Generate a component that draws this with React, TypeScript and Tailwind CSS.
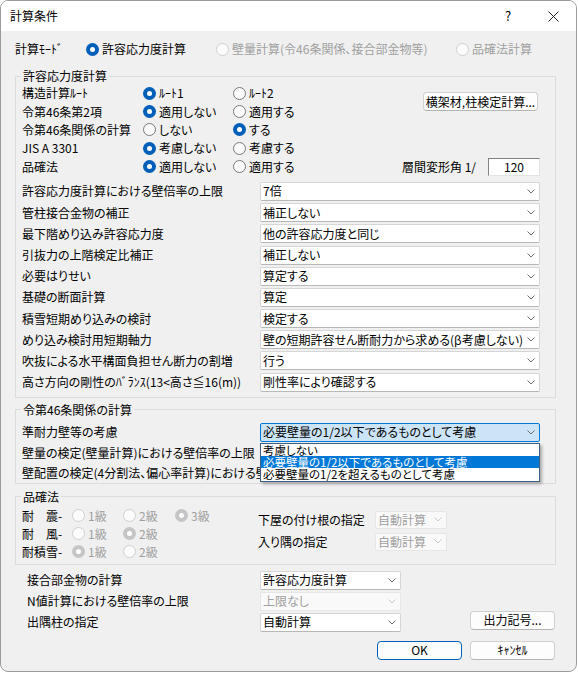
import React from "react";

const FONT = "font-['Noto_Sans_CJK_JP','Noto_Sans',sans-serif] [font-feature-settings:'palt']";

function Chevron({ disabled }: { disabled?: boolean }) {
  return (
    <svg width="8" height="5" viewBox="0 0 8 5" className="shrink-0">
      <polyline
        points="0.5,0.5 4,4 7.5,0.5"
        fill="none"
        stroke={disabled ? "#c8c8c8" : "#6e6e6e"}
        strokeWidth="1"
      />
    </svg>
  );
}

function Radio({
  label,
  checked,
  disabled,
  className = "",
}: {
  label: string;
  checked?: boolean;
  disabled?: boolean;
  className?: string;
}) {
  let circle = "border border-[#7a7a7a] bg-[#fbfbfb]";
  if (checked && !disabled) circle = "bg-[#005fb8]";
  if (!checked && disabled) circle = "border border-[#cfcfcf] bg-[#fbfbfb]";
  if (checked && disabled) circle = "bg-[#c5c5c5]";
  return (
    <div className={`flex items-center gap-[3px] shrink-0 ${className}`}>
      <span className={`w-[13px] h-[13px] rounded-full flex items-center justify-center shrink-0 ${circle}`}>
        {checked && <span className="w-[5px] h-[5px] rounded-full bg-white" />}
      </span>
      <span className={`whitespace-nowrap ${disabled ? "text-[#a0a0a0]" : ""}`}>{label}</span>
    </div>
  );
}

function Combo({
  value,
  disabled,
  active,
  className = "",
}: {
  value: string;
  disabled?: boolean;
  active?: boolean;
  className?: string;
}) {
  let look = "bg-white border border-[#d6d6d6] border-b-[#b8b8b8]";
  if (disabled) look = "bg-[#f9f9f9] border border-[#e6e6e6] text-[#a0a0a0]";
  if (active) look = "bg-[#cce4f7] border border-[#0078d7]";
  return (
    <div className={`h-[19px] flex items-center pl-[2px] pr-[4px] rounded-[2px] ${look} ${className}`}>
      <span className="flex-1 whitespace-nowrap overflow-hidden">{value}</span>
      <Chevron disabled={disabled} />
    </div>
  );
}

function Btn({ children, ok, className = "" }: { children: React.ReactNode; ok?: boolean; className?: string }) {
  return (
    <button
      className={`h-[19px] rounded-[4px] bg-[#fdfdfd] flex items-center justify-center whitespace-nowrap ${
        ok ? "border border-[#005fb8]" : "border border-[#d0d0d0] border-b-[#b5b5b5]"
      } ${className}`}
    >
      {children}
    </button>
  );
}

function Group({ title, className = "", children }: { title: string; className?: string; children: React.ReactNode }) {
  return (
    <fieldset className={`border border-[#dcdcdc] pl-[6px] pr-[15px] ${className}`}>
      <legend className="px-[2px] -ml-[1px] h-[16px] leading-[16px]">{title}</legend>
      {children}
    </fieldset>
  );
}

const radioRows = [
  { label: "構造計算ﾙｰﾄ", a: "ﾙｰﾄ1", b: "ﾙｰﾄ2", pick: 0 },
  { label: "令第46条第2項", a: "適用しない", b: "適用する", pick: 0 },
  { label: "令第46条関係の計算", a: "しない", b: "する", pick: 1 },
  { label: "JIS A 3301", a: "考慮しない", b: "考慮する", pick: 0 },
  { label: "品確法", a: "適用しない", b: "適用する", pick: 0 },
];

const comboRows = [
  ["許容応力度計算における壁倍率の上限", "7倍"],
  ["管柱接合金物の補正", "補正しない"],
  ["最下階めり込み許容応力度", "他の許容応力度と同じ"],
  ["引抜力の上階検定比補正", "補正しない"],
  ["必要はりせい", "算定する"],
  ["基礎の断面計算", "算定"],
  ["積雪短期めり込みの検討", "検定する"],
  ["めり込み検討用短期軸力", "壁の短期許容せん断耐力から求める(β考慮しない)"],
  ["吹抜による水平構面負担せん断力の割増", "行う"],
  ["高さ方向の剛性のﾊﾞﾗﾝｽ(13<高さ≦16(m))", "剛性率により確認する"],
];

const gradeRows = [
  { label: "耐　震-", items: ["1級", "2級", "3級"], pick: 2 },
  { label: "耐　風-", items: ["1級", "2級"], pick: 1 },
  { label: "耐積雪-", items: ["1級", "2級"], pick: 0 },
];

const listItems = ["考慮しない", "必要壁量の1/2以下であるものとして考慮", "必要壁量の1/2を超えるものとして考慮"];

export default function App() {
  return (
    <div className={`w-[578px] h-[673px] bg-white text-black text-[12px] leading-[16px] ${FONT}`}>
      <div className="w-[577px] h-[672px] rounded-[8px] border border-[#9b9b9b] overflow-hidden flex flex-col bg-[#f0f0f0]">
        {/* title bar */}
        <div className="h-[30px] shrink-0 bg-white flex items-center pl-[9px]">
          <span>計算条件</span>
          <span className="ml-auto w-[46px] flex justify-center text-[13px]">?</span>
          <span className="w-[45px] flex justify-center">
            <svg width="11" height="11" viewBox="0 0 11 11">
              <path d="M0.5 0.5 L10.5 10.5 M10.5 0.5 L0.5 10.5" stroke="#1a1a1a" strokeWidth="1" />
            </svg>
          </span>
        </div>

        <div className="flex-1 pl-[14px] pr-[20px] pt-[9px]">
          {/* mode */}
          <div className="h-[18px] flex items-center">
            <span className="w-[71px] shrink-0">計算ﾓｰﾄﾞ</span>
            <Radio className="w-[130px]" label="許容応力度計算" checked />
            <Radio className="w-[240px]" label="壁量計算(令46条関係、接合部金物等)" disabled />
            <Radio label="品確法計算" disabled />
          </div>

          <Group title="許容応力度計算" className="mt-[10px] pb-[5px]">
            <div className="flex">
              <div className="flex flex-col">
                {radioRows.map((r) => (
                  <div key={r.label} className="h-[18.4px] flex items-center">
                    <span className="w-[121px] shrink-0 whitespace-nowrap">{r.label}</span>
                    <Radio className="w-[90px]" label={r.a} checked={r.pick === 0} />
                    <Radio label={r.b} checked={r.pick === 1} />
                  </div>
                ))}
              </div>
              <div className="flex-1 flex flex-col items-end justify-between">
                <Btn className="mt-[8px] w-[115px] mr-[2px]">横架材,柱検定計算...</Btn>
                <div className="flex items-center">
                  <span>層間変形角 1/</span>
                  <div className="ml-[12px] w-[52px] h-[18px] bg-white border border-t-[#838383] border-l-[#838383] border-r-[#e3e3e3] border-b-[#e3e3e3] flex items-center justify-center">
                    120
                  </div>
                </div>
              </div>
            </div>
            <div className="mt-[6px] flex flex-col gap-[2.2px]">
              {comboRows.map(([label, value]) => (
                <div key={label} className="h-[19px] flex items-center">
                  <span className="w-[238px] shrink-0 whitespace-nowrap">{label}</span>
                  <Combo className="flex-1" value={value} />
                </div>
              ))}
            </div>
          </Group>

          <Group title="令第46条関係の計算" className="mt-[4px] pt-[5px]">
            <div className="flex flex-col gap-[1.5px]">
              <div className="h-[19px] flex items-center">
                <span className="w-[238px] shrink-0 whitespace-nowrap">準耐力壁等の考慮</span>
                <div className="relative flex-1">
                  <Combo active value="必要壁量の1/2以下であるものとして考慮" />
                  <div className="absolute z-10 left-0 right-0 top-full mt-[1px] bg-white border border-[#3d5f86] shadow-[2px_2px_3px_rgba(0,0,0,0.3)]">
                    {listItems.map((t, i) => (
                      <div
                        key={t}
                        className={`h-[12.3px] leading-[12.3px] text-[11.5px] pl-[2px] whitespace-nowrap ${
                          i === 1 ? "bg-[#0078d7] text-white" : ""
                        }`}
                      >
                        {t}
                      </div>
                    ))}
                  </div>
                </div>
              </div>
              <div className="h-[19px] flex items-center">
                <span className="w-[238px] shrink-0 overflow-hidden whitespace-nowrap">
                  壁量の検定(壁量計算)における壁倍率の上限
                </span>
              </div>
              <div className="h-[19px] flex items-center">
                <span className="w-[238px] shrink-0 overflow-hidden whitespace-nowrap">
                  壁配置の検定(4分割法、偏心率計算)における壁倍率の上限
                </span>
              </div>
            </div>
          </Group>

          <Group title="品確法" className="mt-[5px] pt-[2px] pb-[3px]">
            <div className="flex">
              <div className="w-[236px] shrink-0 flex flex-col">
                {gradeRows.map((g) => (
                  <div key={g.label} className="h-[18px] flex items-center">
                    <span className="w-[50px] shrink-0 whitespace-nowrap">{g.label}</span>
                    {g.items.map((it, i) => (
                      <Radio
                        key={it}
                        className={i === 0 ? "w-[51px]" : "w-[52px]"}
                        label={it}
                        checked={g.pick === i}
                        disabled
                      />
                    ))}
                  </div>
                ))}
              </div>
              <div className="flex flex-col gap-[4px] pt-[4px]">
                {["下屋の付け根の指定", "入り隅の指定"].map((l) => (
                  <div key={l} className="h-[18px] flex items-center">
                    <span className="w-[117px] shrink-0 whitespace-nowrap">{l}</span>
                    <Combo className="w-[72px] !h-[18px]" value="自動計算" disabled />
                  </div>
                ))}
              </div>
            </div>
          </Group>

          <div className="flex mt-[6px]">
            <div className="flex flex-col gap-[2px] pl-[12px]">
              <div className="h-[19px] flex items-center">
                <span className="w-[233px] shrink-0">接合部金物の計算</span>
                <Combo className="w-[141px]" value="許容応力度計算" />
              </div>
              <div className="h-[19px] flex items-center">
                <span className="w-[233px] shrink-0">N値計算における壁倍率の上限</span>
                <Combo className="w-[141px]" value="上限なし" disabled />
              </div>
              <div className="h-[19px] flex items-center">
                <span className="w-[233px] shrink-0">出隅柱の指定</span>
                <Combo className="w-[141px]" value="自動計算" />
              </div>
            </div>
            <div className="flex-1 flex items-end justify-end pb-[2px]">
              <Btn className="w-[85px] mr-[1px]">出力記号...</Btn>
            </div>
          </div>
          <div className="flex justify-end gap-[8px] mt-[9px] pr-[1px]">
            <Btn ok className="w-[85px]">OK</Btn>
            <Btn className="w-[85px]">ｷｬﾝｾﾙ</Btn>
          </div>
        </div>
      </div>
    </div>
  );
}
